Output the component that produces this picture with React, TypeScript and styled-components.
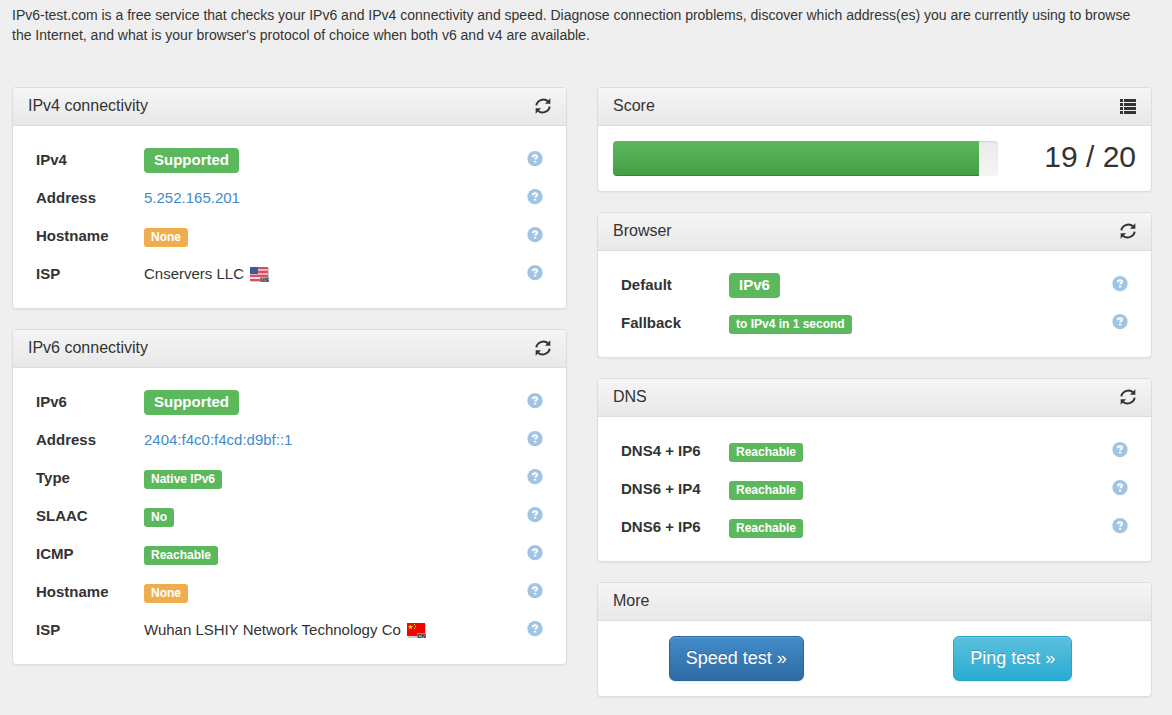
import React from "react";
import styled, { createGlobalStyle, css } from "styled-components";

const GlobalStyle = createGlobalStyle`
  *, *::before, *::after { box-sizing: border-box; }
  body {
    margin: 0;
    background: #efefef;
    color: #333;
    font: 14px/20px Arial, "Liberation Sans", sans-serif;
  }
`;

const Page = styled.main`
  padding: 5px 20px 18px 12px;
`;

const Intro = styled.p`
  margin: 0 0 42px;
`;

const Columns = styled.div`
  display: grid;
  grid-template-columns: repeat(2, minmax(0, 1fr));
  gap: 30px;
  align-items: start;
`;

const Column = styled.div`
  display: flex;
  flex-direction: column;
  gap: 20px;
`;

const Panel = styled.section`
  background: #fff;
  border: 1px solid #ddd;
  border-radius: 4px;
  box-shadow: 0 1px 2px rgba(0, 0, 0, 0.05);
`;

const PanelHeader = styled.header`
  display: flex;
  align-items: center;
  justify-content: space-between;
  height: 38px;
  padding: 0 15px 1px;
  border-bottom: 1px solid #ddd;
  border-radius: 3px 3px 0 0;
  background: linear-gradient(to bottom, #f5f5f5, #e8e8e8);
`;

const PanelTitle = styled.h3`
  margin: 0;
  font-size: 16px;
  font-weight: 400;
`;

const IconButton = styled.button<{ $faded?: boolean }>`
  display: block;
  padding: 0;
  border: 0;
  background: none;
  color: ${(p) => (p.$faded ? "#428bca" : "#333")};
  opacity: ${(p) => (p.$faded ? 0.5 : 1)};
  cursor: pointer;

  svg {
    display: block;
  }
`;

const PanelBody = styled.div`
  padding: 15px;
`;

const InfoTable = styled.table`
  width: 100%;
  border-collapse: collapse;
  table-layout: fixed;
  font-size: 15px;
`;

const Label = styled.th`
  width: 116px;
  height: 38px;
  padding: 0 8px;
  text-align: left;
`;

const Value = styled.td`
  padding: 0;
`;

const ValueLine = styled.div`
  display: flex;
  align-items: center;
  gap: 6px;
`;

const HelpCell = styled.td`
  width: 32px;
  padding: 0 8px 2px;
`;

const Badge = styled.span<{ $tone?: "warning"; $large?: boolean }>`
  border-radius: ${(p) => (p.$large ? 4 : 3)}px;
  background: ${(p) => (p.$tone === "warning" ? "#f0ad4e" : "#5cb85c")};
  color: #fff;
  font-weight: 700;
  ${(p) =>
    p.$large
      ? css`
          padding: 0 10px 1px;
          font-size: 15px;
          line-height: 24px;
        `
      : css`
          margin-top: 3px;
          padding: 0 7px 1px;
          font-size: 12px;
          line-height: 18px;
        `}
`;

const AddressLink = styled.a`
  color: #428bca;
  text-decoration: none;
`;

const ScoreBody = styled(PanelBody)`
  display: flex;
  gap: 30px;
`;

const Progress = styled.div`
  flex: 1;
  height: 35px;
  overflow: hidden;
  border-radius: 4px;
  background: linear-gradient(to bottom, #ebebeb, #f5f5f5);
  box-shadow: inset 0 1px 2px rgba(0, 0, 0, 0.1);
`;

const ProgressBar = styled.div`
  height: 100%;
  background: linear-gradient(to bottom, #5cb85c, #449d44);
  box-shadow: inset 0 -1px 0 rgba(0, 0, 0, 0.15);
`;

const ScoreValue = styled.div`
  width: 108px;
  font-size: 30px;
  line-height: 32px;
  text-align: right;
`;

const MoreBody = styled.div`
  display: grid;
  grid-template-columns: 1fr 1fr;
  justify-items: center;
  padding: 15px 0;
`;

const ActionButton = styled.button<{ $tone: "primary" | "info" }>`
  height: 45px;
  padding: 0 16px 2px;
  border-radius: 6px;
  border: 1px solid ${(p) => (p.$tone === "primary" ? "#2b669a" : "#28a4c9")};
  background: ${(p) =>
    p.$tone === "primary"
      ? "linear-gradient(to bottom, #428bca, #2d6ca2)"
      : "linear-gradient(to bottom, #5bc0de, #2aabd2)"};
  box-shadow: inset 0 1px 0 rgba(255, 255, 255, 0.15), 0 1px 1px rgba(0, 0, 0, 0.075);
  color: #fff;
  font: inherit;
  font-size: 18px;
  text-shadow: 0 -1px 0 rgba(0, 0, 0, 0.2);
  cursor: pointer;
`;

const RefreshIcon = () => (
  <svg width="16" height="16" viewBox="0 0 48 48" aria-hidden="true">
    <g fill="none" stroke="currentColor" strokeWidth="6">
      <path d="M4 22C6 8 26 -2 39 10" />
      <path d="M44 26C42 40 22 50 9 38" />
    </g>
    <path fill="currentColor" d="M46 1v16H30zM2 47V31h16z" />
  </svg>
);

const ListIcon = () => (
  <svg width="16" height="16" viewBox="0 0 16 16" aria-hidden="true" shapeRendering="crispEdges">
    <path
      fill="currentColor"
      d="M0 1h3v3H0zM4 1h12v3H4zM0 5h3v3H0zM4 5h12v3H4zM0 9h3v3H0zM4 9h12v3H4zM0 13h3v3H0zM4 13h12v3H4z"
    />
  </svg>
);

const HelpIcon = () => (
  <svg width="16" height="16" viewBox="0 0 16 16" aria-hidden="true">
    <circle cx="8" cy="7.7" r="7.6" fill="currentColor" />
    <path
      d="M5.8 6.2C5.8 4.7 6.8 4.2 8 4.2s2.1.6 2.1 1.6c0 1.3-1.9 1.3-1.9 2.8"
      fill="none"
      stroke="#fff"
      strokeWidth="2"
    />
    <path d="M7 9.8h2.3v1.7H7z" fill="#fff" />
  </svg>
);

type Country = "us" | "cn";

const Flag = ({ country }: { country: Country }) => (
  <svg width="20" height="17" viewBox="0 0 20 17" role="img" aria-label={country}>
    <rect x="1" y="2" width="18" height="14" fill="#000" opacity="0.2" />
    {country === "us" ? (
      <>
        <rect y="1" width="18" height="14" fill="#f7dfe4" />
        <path
          d="M0 2h18M0 6h18M0 10h18M0 14h18"
          stroke="#d6506c"
          strokeWidth="2"
        />
        <path d="M0 4h18M0 8h18" stroke="#e37b90" strokeWidth="1" />
        <rect y="1" width="8" height="7" fill="#3c5a96" />
      </>
    ) : (
      <>
        <rect y="1" width="18" height="13" fill="#f70000" />
        <path
          fill="#ffde00"
          d="M3.5 2.5l.7 1.8h1.9L4.6 5.4l.5 1.8-1.6-1-1.6 1 .5-1.8L.9 4.3h1.9zM7 2h1v1H7zM8 4h1v1H8zM7 6h1v1H7z"
        />
      </>
    )}
    <rect x="10" y="11" width="9" height="5" fill="#999" opacity="0.8" />
    <text
      x="14.5"
      y="16"
      textAnchor="middle"
      fontSize="6"
      fontWeight="700"
      fontFamily="Arial, Liberation Sans, sans-serif"
      fill="#333"
    >
      {country.toUpperCase()}
    </text>
  </svg>
);

type Row = {
  label: string;
  text?: string;
  href?: string;
  flag?: Country;
  badge?: string;
  large?: boolean;
  tone?: "warning";
};

const ipv4Rows: Row[] = [
  { label: "IPv4", badge: "Supported", large: true },
  { label: "Address", text: "5.252.165.201", href: "#ipv4-address" },
  { label: "Hostname", badge: "None", tone: "warning" },
  { label: "ISP", text: "Cnservers LLC", flag: "us" },
];

const ipv6Rows: Row[] = [
  { label: "IPv6", badge: "Supported", large: true },
  { label: "Address", text: "2404:f4c0:f4cd:d9bf::1", href: "#ipv6-address" },
  { label: "Type", badge: "Native IPv6" },
  { label: "SLAAC", badge: "No" },
  { label: "ICMP", badge: "Reachable" },
  { label: "Hostname", badge: "None", tone: "warning" },
  { label: "ISP", text: "Wuhan LSHIY Network Technology Co", flag: "cn" },
];

const browserRows: Row[] = [
  { label: "Default", badge: "IPv6", large: true },
  { label: "Fallback", badge: "to IPv4 in 1 second" },
];

const dnsRows: Row[] = [
  { label: "DNS4 + IP6", badge: "Reachable" },
  { label: "DNS6 + IP4", badge: "Reachable" },
  { label: "DNS6 + IP6", badge: "Reachable" },
];

const InfoPanel = ({ title, rows }: { title: string; rows: Row[] }) => (
  <Panel>
    <PanelHeader>
      <PanelTitle>{title}</PanelTitle>
      <IconButton type="button" aria-label={`Refresh ${title}`}>
        <RefreshIcon />
      </IconButton>
    </PanelHeader>
    <PanelBody>
      <InfoTable>
        <tbody>
          {rows.map((row) => (
            <tr key={row.label}>
              <Label scope="row">{row.label}</Label>
              <Value>
                <ValueLine>
                  {row.badge && (
                    <Badge $tone={row.tone} $large={row.large}>
                      {row.badge}
                    </Badge>
                  )}
                  {row.text &&
                    (row.href ? (
                      <AddressLink href={row.href}>{row.text}</AddressLink>
                    ) : (
                      <span>{row.text}</span>
                    ))}
                  {row.flag && <Flag country={row.flag} />}
                </ValueLine>
              </Value>
              <HelpCell>
                <IconButton type="button" $faded aria-label={`About ${row.label}`}>
                  <HelpIcon />
                </IconButton>
              </HelpCell>
            </tr>
          ))}
        </tbody>
      </InfoTable>
    </PanelBody>
  </Panel>
);

const score = 19;
const maxScore = 20;

export default function App() {
  return (
    <>
      <GlobalStyle />
      <Page>
        <Intro>
          IPv6-test.com is a free service that checks your IPv6 and IPv4 connectivity and speed.
          Diagnose connection problems, discover which address(es) you are currently using to browse
          the Internet, and what is your browser's protocol of choice when both v6 and v4 are
          available.
        </Intro>
        <Columns>
          <Column>
            <InfoPanel title="IPv4 connectivity" rows={ipv4Rows} />
            <InfoPanel title="IPv6 connectivity" rows={ipv6Rows} />
          </Column>
          <Column>
            <Panel>
              <PanelHeader>
                <PanelTitle>Score</PanelTitle>
                <IconButton type="button" aria-label="Score details">
                  <ListIcon />
                </IconButton>
              </PanelHeader>
              <ScoreBody>
                <Progress
                  role="progressbar"
                  aria-label="Score"
                  aria-valuenow={score}
                  aria-valuemin={0}
                  aria-valuemax={maxScore}
                >
                  <ProgressBar style={{ width: `${(score / maxScore) * 100}%` }} />
                </Progress>
                <ScoreValue>
                  {score} / {maxScore}
                </ScoreValue>
              </ScoreBody>
            </Panel>
            <InfoPanel title="Browser" rows={browserRows} />
            <InfoPanel title="DNS" rows={dnsRows} />
            <Panel>
              <PanelHeader>
                <PanelTitle>More</PanelTitle>
              </PanelHeader>
              <MoreBody>
                <ActionButton type="button" $tone="primary">
                  Speed test »
                </ActionButton>
                <ActionButton type="button" $tone="info">
                  Ping test »
                </ActionButton>
              </MoreBody>
            </Panel>
          </Column>
        </Columns>
      </Page>
    </>
  );
}
